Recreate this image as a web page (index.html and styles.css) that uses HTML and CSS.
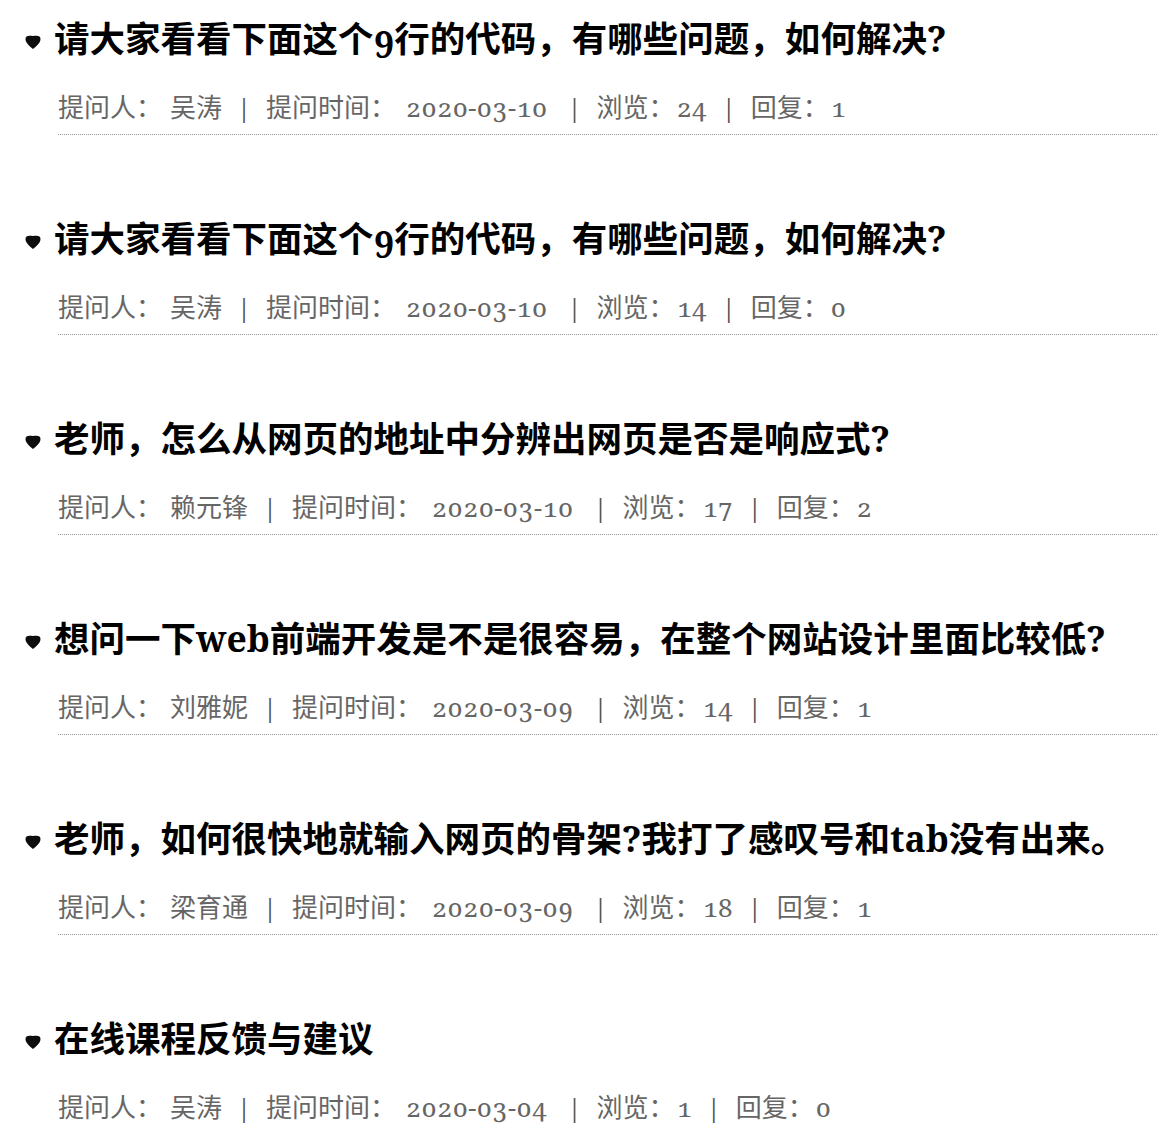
FILE: index.html
```html
<!DOCTYPE html>
<html lang="zh-CN">
<head>
<meta charset="utf-8">
<title>问答列表</title>
<link rel="stylesheet" href="styles.css">
</head>
<body>
<ul class="qa-list">
  <li class="qa-item">
    <h3 class="qa-title"><svg class="bullet" viewBox="0 0 16 16" width="20" height="20"><defs><filter id="b1" x="-30%" y="-30%" width="160%" height="160%"><feGaussianBlur stdDeviation="0.6"/></filter></defs><path d="M2,5.6 C2,2.8 4.5,2.6 8,3.2 C11.5,2.6 14,2.8 14,5.6 C14,8.8 10.5,11.6 8,13.6 C5.5,11.6 2,8.8 2,5.6 Z" fill="#111" filter="url(#b1)"/></svg><span>请大家看看下面这个9行的代码，有哪些问题，如何解决?</span></h3>
    <p class="qa-meta"><span class="lbl">提问人：</span><span class="val">吴涛</span><span class="sep">|</span><span class="lbl">提问时间：</span><span class="val date">2020-03-10</span><span class="sep">|</span><span class="lbl">浏览：</span><span class="num">24</span><span class="sep">|</span><span class="lbl">回复：</span><span class="num">1</span></p>
  </li>
  <li class="qa-item">
    <h3 class="qa-title"><svg class="bullet" viewBox="0 0 16 16" width="20" height="20"><path d="M2,5.6 C2,2.8 4.5,2.6 8,3.2 C11.5,2.6 14,2.8 14,5.6 C14,8.8 10.5,11.6 8,13.6 C5.5,11.6 2,8.8 2,5.6 Z" fill="#111" filter="url(#b1)"/></svg><span>请大家看看下面这个9行的代码，有哪些问题，如何解决?</span></h3>
    <p class="qa-meta"><span class="lbl">提问人：</span><span class="val">吴涛</span><span class="sep">|</span><span class="lbl">提问时间：</span><span class="val date">2020-03-10</span><span class="sep">|</span><span class="lbl">浏览：</span><span class="num">14</span><span class="sep">|</span><span class="lbl">回复：</span><span class="num">0</span></p>
  </li>
  <li class="qa-item">
    <h3 class="qa-title"><svg class="bullet" viewBox="0 0 16 16" width="20" height="20"><path d="M2,5.6 C2,2.8 4.5,2.6 8,3.2 C11.5,2.6 14,2.8 14,5.6 C14,8.8 10.5,11.6 8,13.6 C5.5,11.6 2,8.8 2,5.6 Z" fill="#111" filter="url(#b1)"/></svg><span>老师，怎么从网页的地址中分辨出网页是否是响应式?</span></h3>
    <p class="qa-meta"><span class="lbl">提问人：</span><span class="val">赖元锋</span><span class="sep">|</span><span class="lbl">提问时间：</span><span class="val date">2020-03-10</span><span class="sep">|</span><span class="lbl">浏览：</span><span class="num">17</span><span class="sep">|</span><span class="lbl">回复：</span><span class="num">2</span></p>
  </li>
  <li class="qa-item">
    <h3 class="qa-title"><svg class="bullet" viewBox="0 0 16 16" width="20" height="20"><path d="M2,5.6 C2,2.8 4.5,2.6 8,3.2 C11.5,2.6 14,2.8 14,5.6 C14,8.8 10.5,11.6 8,13.6 C5.5,11.6 2,8.8 2,5.6 Z" fill="#111" filter="url(#b1)"/></svg><span>想问一下web前端开发是不是很容易，在整个网站设计里面比较低?</span></h3>
    <p class="qa-meta"><span class="lbl">提问人：</span><span class="val">刘雅妮</span><span class="sep">|</span><span class="lbl">提问时间：</span><span class="val date">2020-03-09</span><span class="sep">|</span><span class="lbl">浏览：</span><span class="num">14</span><span class="sep">|</span><span class="lbl">回复：</span><span class="num">1</span></p>
  </li>
  <li class="qa-item">
    <h3 class="qa-title"><svg class="bullet" viewBox="0 0 16 16" width="20" height="20"><path d="M2,5.6 C2,2.8 4.5,2.6 8,3.2 C11.5,2.6 14,2.8 14,5.6 C14,8.8 10.5,11.6 8,13.6 C5.5,11.6 2,8.8 2,5.6 Z" fill="#111" filter="url(#b1)"/></svg><span>老师，如何很快地就输入网页的骨架?我打了感叹号和tab没有出来。</span></h3>
    <p class="qa-meta"><span class="lbl">提问人：</span><span class="val">梁育通</span><span class="sep">|</span><span class="lbl">提问时间：</span><span class="val date">2020-03-09</span><span class="sep">|</span><span class="lbl">浏览：</span><span class="num">18</span><span class="sep">|</span><span class="lbl">回复：</span><span class="num">1</span></p>
  </li>
  <li class="qa-item">
    <h3 class="qa-title"><svg class="bullet" viewBox="0 0 16 16" width="20" height="20"><path d="M2,5.6 C2,2.8 4.5,2.6 8,3.2 C11.5,2.6 14,2.8 14,5.6 C14,8.8 10.5,11.6 8,13.6 C5.5,11.6 2,8.8 2,5.6 Z" fill="#111" filter="url(#b1)"/></svg><span>在线课程反馈与建议</span></h3>
    <p class="qa-meta"><span class="lbl">提问人：</span><span class="val">吴涛</span><span class="sep">|</span><span class="lbl">提问时间：</span><span class="val date">2020-03-04</span><span class="sep">|</span><span class="lbl">浏览：</span><span class="num">1</span><span class="sep">|</span><span class="lbl">回复：</span><span class="num">0</span></p>
  </li>
</ul>
</body>
</html>
```
FILE: styles.css
```css
html, body {
  margin: 0;
  padding: 0;
  background: #fff;
}

body {
  font-family: "Noto Serif", "Noto Sans CJK SC", serif;
  font-feature-settings: "onum" 1;
  overflow: hidden;
}

.qa-list {
  list-style: none;
  margin: 0;
  padding: 0 2px 0 23px;
}

.qa-item {
  height: 200px;
  padding-top: 16px;
  box-sizing: border-box;
}

.qa-title {
  display: flex;
  align-items: center;
  margin: 0;
  height: 44px;
  font-size: 35.5px;
  line-height: 44px;
  font-weight: 700;
  color: #000;
  white-space: nowrap;
}

.bullet {
  flex: none;
  width: 20px;
  height: 20px;
  margin: 7px 11px 0 0;
}

.qa-meta {
  margin: 27px 0 0 35px;
  padding-bottom: 7px;
  border-bottom: 1px dotted #999;
  font-size: 26px;
  line-height: 40px;
  height: 40px;
  color: #666;
  white-space: nowrap;
}

.qa-meta span {
  display: inline-block;
  vertical-align: top;
}

.val {
  margin-left: 8px;
}

.date {
  margin-left: 10px;
  margin-right: 5px;
  letter-spacing: 0.5px;
}

.num {
  margin-left: 2px;
}

.sep {
  width: 44px;
  text-align: center;
  color: #555;
}
```
